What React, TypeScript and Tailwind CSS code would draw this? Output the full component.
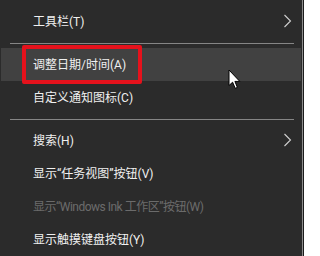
const FONT = { fontFamily: 'Roboto, "Noto Sans CJK SC", sans-serif' };

type Item = {
  label: string;
  submenu?: boolean;
  disabled?: boolean;
  active?: boolean;
};

function Chevron() {
  return (
    <svg width="9" height="14" viewBox="0 0 9 14" className="mr-[9px] -mt-[1px]">
      <polyline points="1.5,1 7.5,7 1.5,13" fill="none" stroke="#d0d0d0" strokeWidth="1.1" />
    </svg>
  );
}

function MenuRow({ item }: { item: Item }) {
  return (
    <div
      className={
        "relative mx-[1px] flex h-[33px] items-center justify-between pl-[32px] text-[12px] " +
        (item.active ? "bg-[#414141] " : "") +
        (item.disabled ? "tracking-[-0.5px] text-[#6b6b6b]" : "text-[#f0f0f0]")
      }
    >
      <span className="whitespace-pre">{item.label}</span>
      {item.submenu && <Chevron />}
      {item.active && (
        <div className="pointer-events-none absolute left-[21px] top-[-3px] h-[39px] w-[120px] rounded-[2px] border-[4px] border-[#e5121c]" />
      )}
    </div>
  );
}

function Separator() {
  return (
    <div className="flex h-[10px] items-center pl-[10px] pr-[8px]">
      <div className="h-[1px] w-full bg-[#858585]" />
    </div>
  );
}

const groupA: Item[] = [{ label: "工具栏(T)", submenu: true }];
const groupB: Item[] = [
  { label: "调整日期/时间(A)", active: true },
  { label: "自定义通知图标(C)" },
];
const groupC: Item[] = [
  { label: "搜索(H)", submenu: true },
  { label: "显示“任务视图”按钮(V)" },
  { label: "显示“Windows Ink 工作区”按钮(W)", disabled: true },
  { label: "显示触摸键盘按钮(Y)" },
];

export default function App() {
  return (
    <div className="flex h-[256px] w-[304px] overflow-hidden bg-[#1c1c1c]" style={FONT}>
      <div className="relative w-[302px] bg-[#2b2b2b] pt-[5px]">
        {groupA.map((item) => (
          <MenuRow key={item.label} item={item} />
        ))}
        <Separator />
        {groupB.map((item) => (
          <MenuRow key={item.label} item={item} />
        ))}
        <Separator />
        {groupC.map((item) => (
          <MenuRow key={item.label} item={item} />
        ))}

        {/* mouse pointer */}
        <svg
          width="13"
          height="21"
          viewBox="0 0 13 21"
          className="pointer-events-none absolute left-[228px] top-[69px]"
        >
          <path
            d="M1 1 L1 16.5 L4.6 13.2 L7.2 19.3 L9.4 18.4 L6.9 12.4 L11.8 12.4 Z"
            fill="#ffffff"
            stroke="#000000"
            strokeWidth="1"
            strokeLinejoin="miter"
          />
        </svg>
      </div>
      <div className="w-[1px] bg-[#8c8c8c]" />
    </div>
  );
}
